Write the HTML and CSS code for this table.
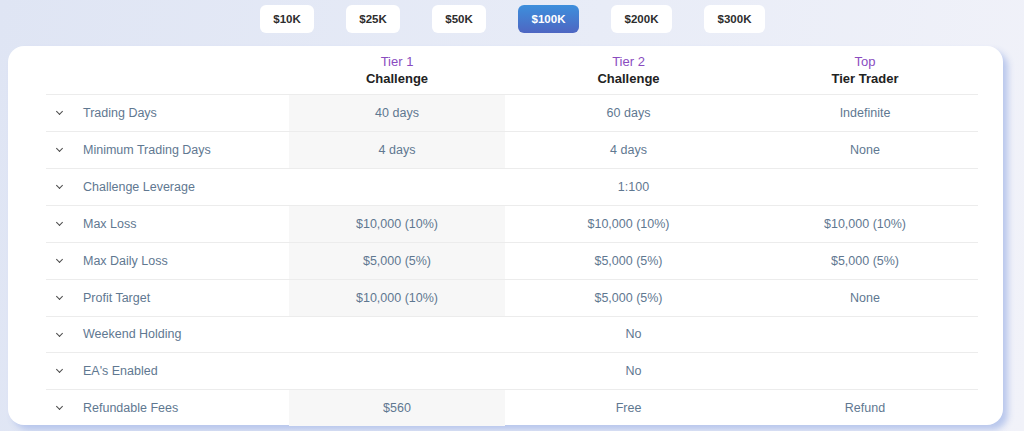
FILE: index.html
```html
<!DOCTYPE html>
<html lang="en">
<head>
<meta charset="utf-8">
<title>Plans</title>
<link rel="stylesheet" href="styles.css">
</head>
<body>
<div class="page">
  <nav class="sizes">
    <button class="size">$10K</button>
    <button class="size">$25K</button>
    <button class="size">$50K</button>
    <button class="size wide active">$100K</button>
    <button class="size wide">$200K</button>
    <button class="size wide">$300K</button>
  </nav>
  <section class="card">
    <table class="compare">
      <colgroup>
        <col class="c-label"><col class="c-t1"><col class="c-t2"><col class="c-t3">
      </colgroup>
      <thead>
        <tr>
          <th></th>
          <th><span class="tier">Tier 1</span><span class="name">Challenge</span></th>
          <th><span class="tier">Tier 2</span><span class="name">Challenge</span></th>
          <th><span class="tier">Top</span><span class="name">Tier Trader</span></th>
        </tr>
      </thead>
      <tbody>
        <tr><td class="label"><span class="chev"></span>Trading Days</td><td class="shade">40 days</td><td>60 days</td><td>Indefinite</td></tr>
        <tr><td class="label"><span class="chev"></span>Minimum Trading Days</td><td class="shade">4 days</td><td>4 days</td><td>None</td></tr>
        <tr><td class="label"><span class="chev"></span>Challenge Leverage</td><td colspan="3">1:100</td></tr>
        <tr><td class="label"><span class="chev"></span>Max Loss</td><td class="shade">$10,000 (10%)</td><td>$10,000 (10%)</td><td>$10,000 (10%)</td></tr>
        <tr><td class="label"><span class="chev"></span>Max Daily Loss</td><td class="shade">$5,000 (5%)</td><td>$5,000 (5%)</td><td>$5,000 (5%)</td></tr>
        <tr><td class="label"><span class="chev"></span>Profit Target</td><td class="shade">$10,000 (10%)</td><td>$5,000 (5%)</td><td>None</td></tr>
        <tr class="short"><td class="label"><span class="chev"></span>Weekend Holding</td><td colspan="3">No</td></tr>
        <tr><td class="label"><span class="chev"></span>EA's Enabled</td><td colspan="3">No</td></tr>
        <tr><td class="label"><span class="chev"></span>Refundable Fees</td><td class="shade">$560</td><td>Free</td><td>Refund</td></tr>
      </tbody>
    </table>
  </section>
</div>
</body>
</html>
```

FILE: styles.css
```css
* { box-sizing: border-box; }
html, body { margin: 0; padding: 0; }
body {
  width: 1024px;
  height: 431px;
  overflow: hidden;
  font-family: "Liberation Sans", Arial, sans-serif;
  background: linear-gradient(100deg, #dfe5f4 0%, #e8ecf7 55%, #f1f2f9 100%);
}
.page {
  display: flex;
  flex-direction: column;
  padding-top: 5px;
}
.sizes {
  display: flex;
  justify-content: center;
  gap: 32px;
  height: 28px;
  padding-left: 1px;
}
.size {
  border: 0;
  border-radius: 6px;
  background: #fff;
  font-family: "Liberation Sans", Arial, sans-serif;
  font-weight: bold;
  font-size: 11.5px;
  color: #2d2d2d;
  padding: 0;
  width: 54px;
  height: 28px;
}
.size.wide { width: 61px; }
.size.active {
  background: linear-gradient(180deg, #3d8fdc 0%, #4e66c2 100%);
  color: #fff;
}
.card {
  margin: 13px 0 0 8px;
  width: 995px;
  height: 379px;
  background: #fff;
  border-radius: 16px;
  box-shadow: 5px 5px 6px rgba(180, 195, 235, 0.9);
  padding: 0 25px 0 38px;
}
.compare {
  width: 932px;
  border-collapse: collapse;
  table-layout: fixed;
  font-size: 12.5px;
  color: #5f7891;
}
.c-label { width: 243px; }
.c-t1 { width: 216px; }
.c-t2 { width: 247px; }
.c-t3 { width: 226px; }
thead th {
  height: 48px;
  padding: 8px 0 0;
  vertical-align: top;
  text-align: center;
  font-weight: normal;
}
.tier {
  display: block;
  color: #8a4cbf;
  font-size: 13px;
  line-height: 16px;
}
.name {
  display: block;
  color: #222;
  font-weight: bold;
  font-size: 13px;
  line-height: 17px;
}
tbody tr { border-top: 1px solid #ececec; }
tbody td {
  height: 37px;
  padding: 0;
  text-align: center;
  vertical-align: middle;
}
tbody tr.short td { height: 36px; }
tbody td.label {
  text-align: left;
  padding-left: 10px;
}
td.shade { background: #f7f7f7; }
.chev {
  display: inline-block;
  width: 5px;
  height: 5px;
  border-right: 1.6px solid #4a4a4a;
  border-bottom: 1.6px solid #4a4a4a;
  transform: rotate(45deg);
  margin: 0 21px 3px 1px;
  vertical-align: middle;
}
```
